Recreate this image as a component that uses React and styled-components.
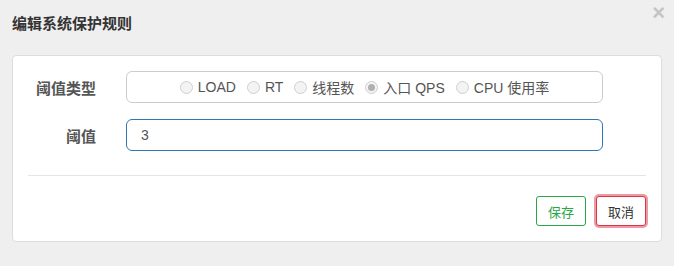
import React from "react";
import styled, { createGlobalStyle } from "styled-components";

const GlobalStyle = createGlobalStyle`
  html, body {
    margin: 0;
    padding: 0;
    background: #efefef;
    font-family: "Liberation Sans", "Noto Sans CJK SC", sans-serif;
  }
`;

const Dialog = styled.div`
  position: relative;
  width: 674px;
  height: 266px;
  box-sizing: border-box;
  padding: 12px 12px 0 12px;
  background: #efefef;
`;

const Title = styled.h3`
  margin: 0;
  padding-top: 3px;
  height: 40px;
  font-size: 15px;
  font-weight: bold;
  color: #333;
  line-height: 18px;
`;

const Close = styled.span`
  position: absolute;
  top: 2px;
  right: 9px;
  font-size: 22px;
  font-weight: bold;
  color: #c4c4c4;
  line-height: 22px;
`;

const Card = styled.div`
  width: 650px;
  height: 187px;
  box-sizing: border-box;
  background: #fff;
  border: 1px solid #ddd;
  border-radius: 4px;
  padding: 15px 15px 0 15px;
`;

const Row = styled.div`
  display: flex;
  align-items: center;
  margin-bottom: 16px;
`;

const Label = styled.label`
  width: 68px;
  text-align: right;
  font-size: 15px;
  font-weight: bold;
  color: #555;
  margin-right: 30px;
`;

const Box = styled.div`
  width: 477px;
  height: 32px;
  box-sizing: border-box;
  border: 1px solid ${(p) => (p.focused ? "#3176b1" : "#ccc")};
  border-radius: 6px;
  display: flex;
  align-items: center;
  justify-content: ${(p) => (p.center ? "center" : "flex-start")};
  padding: 0 14px;
  font-size: 14px;
  color: #555;
`;

const RadioItem = styled.span`
  display: inline-flex;
  align-items: center;
  margin-right: 11px;
  &:last-child {
    margin-right: 0;
  }
`;

const Dot = styled.span`
  width: 11px;
  height: 11px;
  border-radius: 50%;
  border: 1px solid #cfcfcf;
  background: #f3f3f3;
  margin-right: 5px;
  display: inline-flex;
  align-items: center;
  justify-content: center;
  &::after {
    content: "";
    display: ${(p) => (p.checked ? "block" : "none")};
    width: 7px;
    height: 7px;
    border-radius: 50%;
    background: #b0b0b0;
  }
`;

const Divider = styled.div`
  height: 1px;
  background: #e5e5e5;
  margin: 24px 0 0 0;
`;

const Footer = styled.div`
  display: flex;
  justify-content: flex-end;
  gap: 10px;
  padding-top: 20px;
`;

const Button = styled.button`
  height: 30px;
  padding: 0 11px;
  border-radius: 3px;
  background: #fff;
  font-family: inherit;
  font-size: 13px;
  border: 1px solid ${(p) => (p.danger ? "#dc3545" : "#28a745")};
  color: ${(p) => (p.danger ? "#333" : "#28a745")};
  box-shadow: ${(p) => (p.danger ? "0 0 0 2px rgba(220, 53, 69, 0.5)" : "none")};
`;

const types = [
  { name: "LOAD" },
  { name: "RT" },
  { name: "线程数" },
  { name: "入口 QPS", checked: true },
  { name: "CPU 使用率" },
];

export default function App() {
  return (
    <>
      <GlobalStyle />
      <Dialog>
        <Title>编辑系统保护规则</Title>
        <Close>×</Close>
        <Card>
          <Row>
            <Label>阈值类型</Label>
            <Box center>
              {types.map((t) => (
                <RadioItem key={t.name}>
                  <Dot checked={t.checked} />
                  {t.name}
                </RadioItem>
              ))}
            </Box>
          </Row>
          <Row>
            <Label>阈值</Label>
            <Box focused>3</Box>
          </Row>
          <Divider />
          <Footer>
            <Button>保存</Button>
            <Button danger>取消</Button>
          </Footer>
        </Card>
      </Dialog>
    </>
  );
}
